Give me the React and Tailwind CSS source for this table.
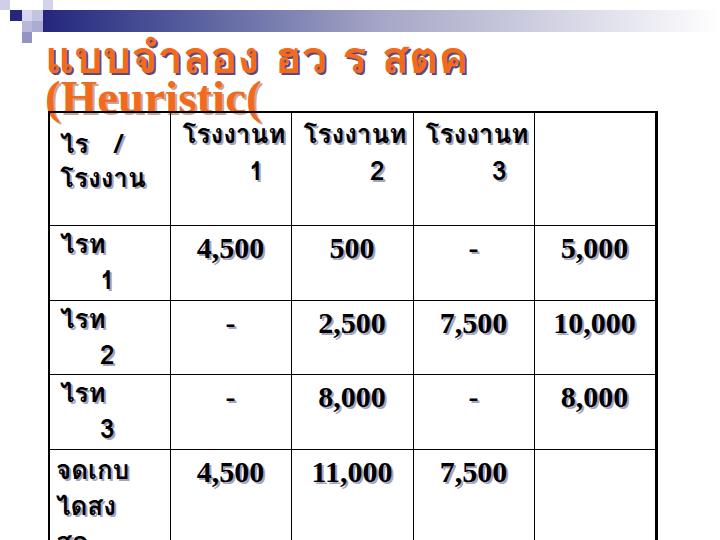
import React from "react";

const thai = "font-['Loma','Noto_Sans_Thai','Garuda','DejaVu_Sans',sans-serif]";
const serif = "font-['Liberation_Serif','Times_New_Roman',serif]";
const shadow = "[text-shadow:2px_2px_0_#a4a4bc]";

const Corner = () => (
  <svg width="53" height="43" viewBox="0 0 53 43" className="shrink-0">
    <rect x="0" y="0" width="10" height="10" fill="#cfcfea" />
    <rect x="43" y="0" width="10" height="10" fill="#d2d2ec" />
    <rect x="10" y="10" width="12" height="11" fill="#26267c" />
    <rect x="22" y="10" width="10" height="11" fill="#d6d6ee" />
    <rect x="32" y="10" width="11" height="11" fill="#c4c4e0" />
    <rect x="22" y="21" width="10" height="11" fill="#b8b8da" />
    <rect x="32" y="21" width="11" height="11" fill="#acacd2" />
    <rect x="22" y="32" width="10" height="11" fill="#9494c4" />
  </svg>
);

const Label = ({ top, bottom }) => (
  <div className={`${thai} font-bold text-[26px] leading-[36px] text-black ${shadow}`}>
    <div>{top}</div>
    <div className="pl-[40px]">{bottom}</div>
  </div>
);

const Num = ({ v }) => (
  <div className={`${serif} font-bold text-[30px] leading-[36px] text-black text-center ${shadow}`}>
    {v}
  </div>
);

const rows = [
  { label: ["ไรท", "1"], vals: ["4,500", "500", "-", "5,000"], h: "h-[75px]" },
  { label: ["ไรท", "2"], vals: ["-", "2,500", "7,500", "10,000"], h: "h-[74px]" },
  { label: ["ไรท", "3"], vals: ["-", "8,000", "-", "8,000"], h: "h-[75px]" },
];

export default function App() {
  return (
    <div className="w-[720px] h-[540px] overflow-hidden bg-white relative">
      <div className="flex items-start">
        <Corner />
        <div className="mt-[10px] h-[22px] flex-1 -ml-[10px] bg-linear-to-r from-[#25257c] via-[#a6a6c6] to-white" />
      </div>

      <div className="pl-[45px] -mt-[8px] text-[#f26a1c]">
        <div className={`${thai} font-bold text-[45px] leading-[44px] [text-shadow:2px_2px_0_#5c4a78] whitespace-pre`}>
          แบบจำลอง ฮว ร สตค
        </div>
        <div className={`${serif} font-bold text-[47px] leading-[36px] [text-shadow:2px_2px_0_#c8a890]`}>
          (Heuristic(
        </div>
      </div>

      <table className="ml-[48px] -mt-[4px] table-fixed border-collapse border-l-2 border-t-2 border-r-[3px] border-black relative">
        <colgroup>
          <col className="w-[121px]" />
          <col className="w-[121px]" />
          <col className="w-[122px]" />
          <col className="w-[121px]" />
          <col className="w-[122px]" />
        </colgroup>
        <tbody>
          <tr className="h-[113px]">
            <td className="border border-black align-top pl-[10px] pt-[14px]">
              <div className={`${thai} font-bold text-[26px] leading-[34px] ${shadow} whitespace-pre`}>
                <div>ไร   /</div>
                <div>โรงงาน</div>
              </div>
            </td>
            {["1", "2", "3"].map((n) => (
              <td key={n} className="border border-black align-top pt-[2px] pl-[12px]">
                <div className={`${thai} font-bold text-[26px] leading-[37px] ${shadow} inline-block`}>
                  <div>โรงงานท</div>
                  <div className="text-right pr-[22px]">{n}</div>
                </div>
              </td>
            ))}
            <td className="border border-black" />
          </tr>
          {rows.map((r) => (
            <tr key={r.label[1]} className={r.h}>
              <td className="border border-black align-top pl-[10px]">
                <Label top={r.label[0]} bottom={r.label[1]} />
              </td>
              {r.vals.map((v, i) => (
                <td key={i} className="border border-black align-top pt-[4px]">
                  <Num v={v} />
                </td>
              ))}
            </tr>
          ))}
          <tr className="h-[100px]">
            <td className="border border-black align-top pl-[6px] pt-[2px]">
              <div className={`${thai} font-bold text-[26px] leading-[36px] ${shadow}`}>
                <div>จดเกบ</div>
                <div>ไดสง</div>
                <div>สด</div>
              </div>
            </td>
            {["4,500", "11,000", "7,500", ""].map((v, i) => (
              <td key={i} className="border border-black align-top pt-[4px]">
                <Num v={v} />
              </td>
            ))}
          </tr>
        </tbody>
      </table>
    </div>
  );
}
